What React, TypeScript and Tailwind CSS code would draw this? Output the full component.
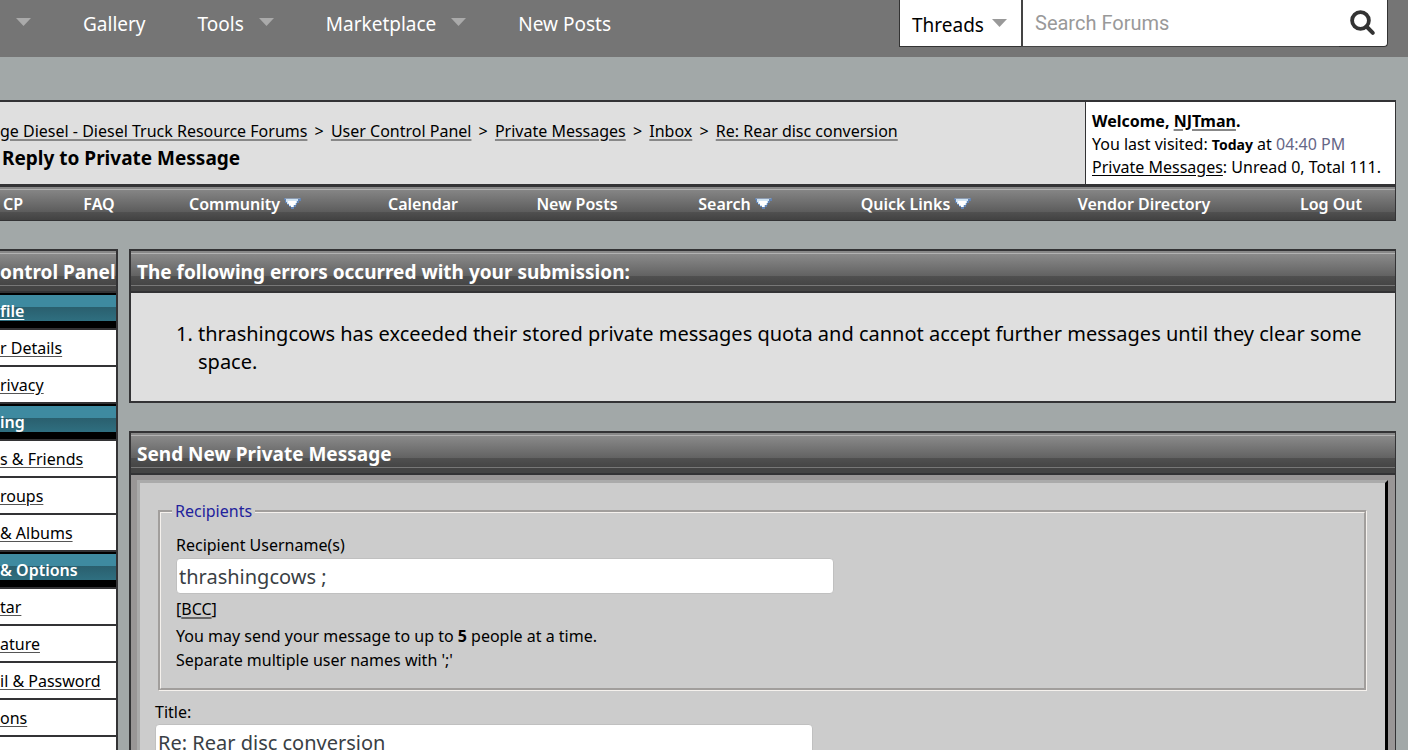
import type { ReactNode } from 'react';

const navItems = [
  { label: 'Gallery', menu: false },
  { label: 'Tools', menu: true },
  { label: 'Marketplace', menu: true },
  { label: 'New Posts', menu: false },
];

const crumbs = [
  'ge Diesel - Diesel Truck Resource Forums',
  'User Control Panel',
  'Private Messages',
  'Inbox',
  'Re: Rear disc conversion',
];

const forumMenu = [
  { label: 'FAQ', menu: false },
  { label: 'Community', menu: true },
  { label: 'Calendar', menu: false },
  { label: 'New Posts', menu: false },
  { label: 'Search', menu: true },
  { label: 'Quick Links', menu: true },
  { label: 'Vendor Directory', menu: false },
  { label: 'Log Out', menu: false },
];

const sidebar = [
  { title: 'file', linked: true, links: ['r Details', 'rivacy'] },
  { title: 'ing', linked: false, links: ['s & Friends', 'roups', '& Albums'] },
  { title: '& Options', linked: false, links: ['tar', 'ature', 'il & Password', 'ons'] },
];

function Caret({ className }: { className: string }) {
  return (
    <svg className={`mb-1 ${className}`} width="15" height="8" viewBox="0 0 15 8" aria-hidden="true">
      <path d="M0 0h15L7.5 8z" fill="currentColor" />
    </svg>
  );
}

function MenuArrow() {
  return (
    <svg width="17" height="11" viewBox="0 0 17 11" shapeRendering="crispEdges" aria-hidden="true">
      <path d="M0 0h17v3h-2v2h-2v2h-1v2h-2v2H7V9H5V7H3V5H1V2H0z" fill="#6384b3" />
      <path d="M2 1h12v2h-1v2h-1v2h-2v2H7V8H5V6H3V4H2z" fill="#cfe3f3" />
      <path d="M4 3h8v2h-1v2H9v2H7V7H5V5H4z" fill="#ffffff" />
      <path d="M1 0h15v1H1z" fill="#8d9bb0" />
    </svg>
  );
}

/* Dark glossy bar used as the title of every panel */
function PanelTitle({ children, flush = false }: { children: ReactNode; flush?: boolean }) {
  return (
    <div className={`h-[42px] border-b-2 border-[#333335] bg-[linear-gradient(to_bottom,#888_0px,#888_2px,#b2b2b2_2px,#b2b2b2_3px,#8a8a8a_3px,#626262_25px,#505050_25px,#454545_34px,#777_34px,#777_35px,#444_35px)] ${flush ? '' : 'pl-1.5'}`}>
      <h2 className="pt-[5px] text-[19px] font-bold leading-8 text-white">{children}</h2>
    </div>
  );
}

function TopBar() {
  return (
    <header className="flex h-[57px] items-start justify-between bg-[#757575] pl-4 pr-5 text-white">
      <nav className="flex items-center gap-[52px] text-[19px] leading-[48px]">
        <Caret className="text-[#aaaaaa]" />
        {navItems.map((item) => (
          <a key={item.label} href="#" className="flex items-center gap-[15px]">
            {item.label}
            {item.menu && <Caret className="text-[#aaaaaa]" />}
          </a>
        ))}
      </nav>

      <form className="flex h-[47px] text-[19px]">
        <button
          type="button"
          className="flex w-[122px] items-center gap-2 border-b border-l border-[#333] bg-white pl-3 pt-1 text-black"
        >
          Threads
          <Caret className="text-[#999999]" />
        </button>
        <input
          type="text"
          aria-label="Search Forums"
          placeholder="Search Forums"
          className="w-[318px] border-b border-l-2 border-[#444] bg-white px-3 font-[Roboto,sans-serif] text-[20px] text-black placeholder:text-[#999]"
        />
        <button
          type="submit"
          aria-label="Search"
          className="flex w-[49px] items-center justify-center rounded-br-sm border-b border-r border-[#333] bg-white text-[#333]"
        >
          <svg width="26" height="26" viewBox="0 0 26 26" fill="none" stroke="currentColor" aria-hidden="true">
            <circle cx="10.5" cy="10.5" r="8.4" strokeWidth="3.8" />
            <path d="M16.5 16.5l6.3 6.3" strokeWidth="4" strokeLinecap="round" />
          </svg>
        </button>
      </form>
    </header>
  );
}

function Navbar() {
  return (
    <section className="border-r border-t-2 border-[#333335]">
      <div className="flex h-[85px] border-b-[3px] border-[#333335]">
        <div className="flex-1 bg-[#dfdfdf] pt-[17px]">
          <p className="whitespace-nowrap text-[16px] leading-6">
            {crumbs.map((crumb, i) => (
              <span key={crumb}>
                {i > 0 && <span className="px-[3px]"> &gt; </span>}
                <a href="#" className="underline decoration-[#888] decoration-2 underline-offset-2">
                  {crumb}
                </a>
              </span>
            ))}
          </p>
          <h1 className="pl-0.5 text-[19px] font-bold leading-[30px]">Reply to Private Message</h1>
        </div>
        <div className="min-w-[310px] whitespace-nowrap border-l border-[#333335] bg-white px-1.5 pt-2 text-[16px] leading-[23px]">
          <p className="font-bold">
            Welcome,{' '}
            <a href="#" className="underline decoration-[#888] decoration-2 underline-offset-2">NJTman</a>.
          </p>
          <p>
            You last visited: <strong className="text-[14px]">Today</strong> at{' '}
            <span className="text-[#666686]">04:40 PM</span>
          </p>
          <p>
            <a href="#" className="underline underline-offset-2">Private Messages</a>: Unread 0, Total 111.
          </p>
        </div>
      </div>
      <nav className="grid h-[34px] grid-cols-[59fr_80fr_212fr_144fr_164fr_152fr_210fr_246fr_128fr] items-center border-b border-[#333335] bg-[linear-gradient(to_bottom,#888_0px,#888_2px,#b0b0b0_2px,#b0b0b0_3px,#858585_3px,#5c5c5c_25px,#505050_25px,#424242_33px)] text-[16px] font-semibold text-white">
        <a href="#" className="pl-[3px]">CP</a>
        {forumMenu.map((item) => (
          <a key={item.label} href="#" className="flex items-center justify-center gap-1">
            {item.label}
            {item.menu && <MenuArrow />}
          </a>
        ))}
      </nav>
    </section>
  );
}

function Sidebar() {
  return (
    <aside className="w-[118px] shrink-0 whitespace-nowrap border-r-2 border-t-2 border-[#333335] text-[16px]">
      <PanelTitle flush>ontrol Panel</PanelTitle>
      {sidebar.map((group) => (
        <div key={group.title}>
          <h3 className="h-[37px] border-b-2 border-[#333335] bg-[linear-gradient(to_bottom,#000_0px,#000_2px,#3e8aa0_2px,#3e8aa0_14px,#2a5f6e_14px,#2f6f80_28px,#000_28px)] font-semibold leading-9 text-white">
            {group.linked ? <a href="#" className="underline underline-offset-2">{group.title}</a> : group.title}
          </h3>
          <ul>
            {group.links.map((link) => (
              <li key={link} className="h-[37px] border-b-2 border-[#333335] bg-white leading-9">
                <a href="#" className="underline decoration-[#555] underline-offset-2">{link}</a>
              </li>
            ))}
          </ul>
        </div>
      ))}
      <div className="h-[37px] bg-white" />
    </aside>
  );
}

function ErrorPanel() {
  return (
    <section className="border-2 border-r border-[#333335] bg-[#dfdfdf]">
      <PanelTitle>The following errors occurred with your submission:</PanelTitle>
      <ol className="list-decimal pb-[25px] pl-[67px] pr-6 pt-[27px] text-[20px] leading-7">
        <li>
          thrashingcows has exceeded their stored private messages quota and cannot accept further
          messages until they clear some space.
        </li>
      </ol>
    </section>
  );
}

function MessagePanel() {
  return (
    <section className="border-2 border-r border-[#333335] bg-[#999696]">
      <PanelTitle>Send New Private Message</PanelTitle>
      <form className="ml-1.5 mr-[7px] mt-[5px] border-l-[3px] border-r-[3px] border-t-[3px] border-l-[#aaa] border-r-black border-t-[#aaa] bg-[#cccccc] pl-[15px] pr-[18px] pt-4 text-[16px] leading-6">
        <fieldset className="ml-[3px] border-[3px] border-[#f5f1ed] pb-4 pl-[15px] pr-4 [border-style:groove]">
          <legend className="-ml-1 px-[3px] text-[#22229c]">Recipients</legend>
          <label htmlFor="recipients" className="mt-2.5 block pb-px">Recipient Username(s)</label>
          <input
            id="recipients"
            type="text"
            defaultValue="thrashingcows ;"
            className="block h-9 w-[658px] max-w-full rounded-sm border border-[#c0c0c0] bg-white px-0.5 text-[20px] text-[#3a3f45]"
          />
          <p className="pt-[3px]">
            [<a href="#" className="underline decoration-[#666] decoration-2 underline-offset-2">BCC</a>]
          </p>
          <p className="pt-[3px]">
            You may send your message to up to <strong>5</strong> people at a time.
          </p>
          <p>Separate multiple user names with ';'</p>
        </fieldset>
        <label htmlFor="title" className="block pt-[9px]">Title:</label>
        <input
          id="title"
          type="text"
          defaultValue="Re: Rear disc conversion"
          className="block h-9 w-[658px] max-w-full rounded-sm border border-[#c0c0c0] bg-white px-0.5 text-[20px] text-[#3a3f45]"
        />
        <div className="h-40" />
      </form>
    </section>
  );
}

export default function App() {
  return (
    <div className="h-screen overflow-hidden bg-[#a2a8a8] font-['Noto_Sans','Open_Sans',sans-serif] text-black">
      <TopBar />
      <main className="mr-3 mt-[43px]">
        <Navbar />
        <div className="mt-7 flex items-start gap-[11px]">
          <Sidebar />
          <div className="flex min-w-0 flex-1 flex-col gap-7">
            <ErrorPanel />
            <MessagePanel />
          </div>
        </div>
      </main>
    </div>
  );
}
